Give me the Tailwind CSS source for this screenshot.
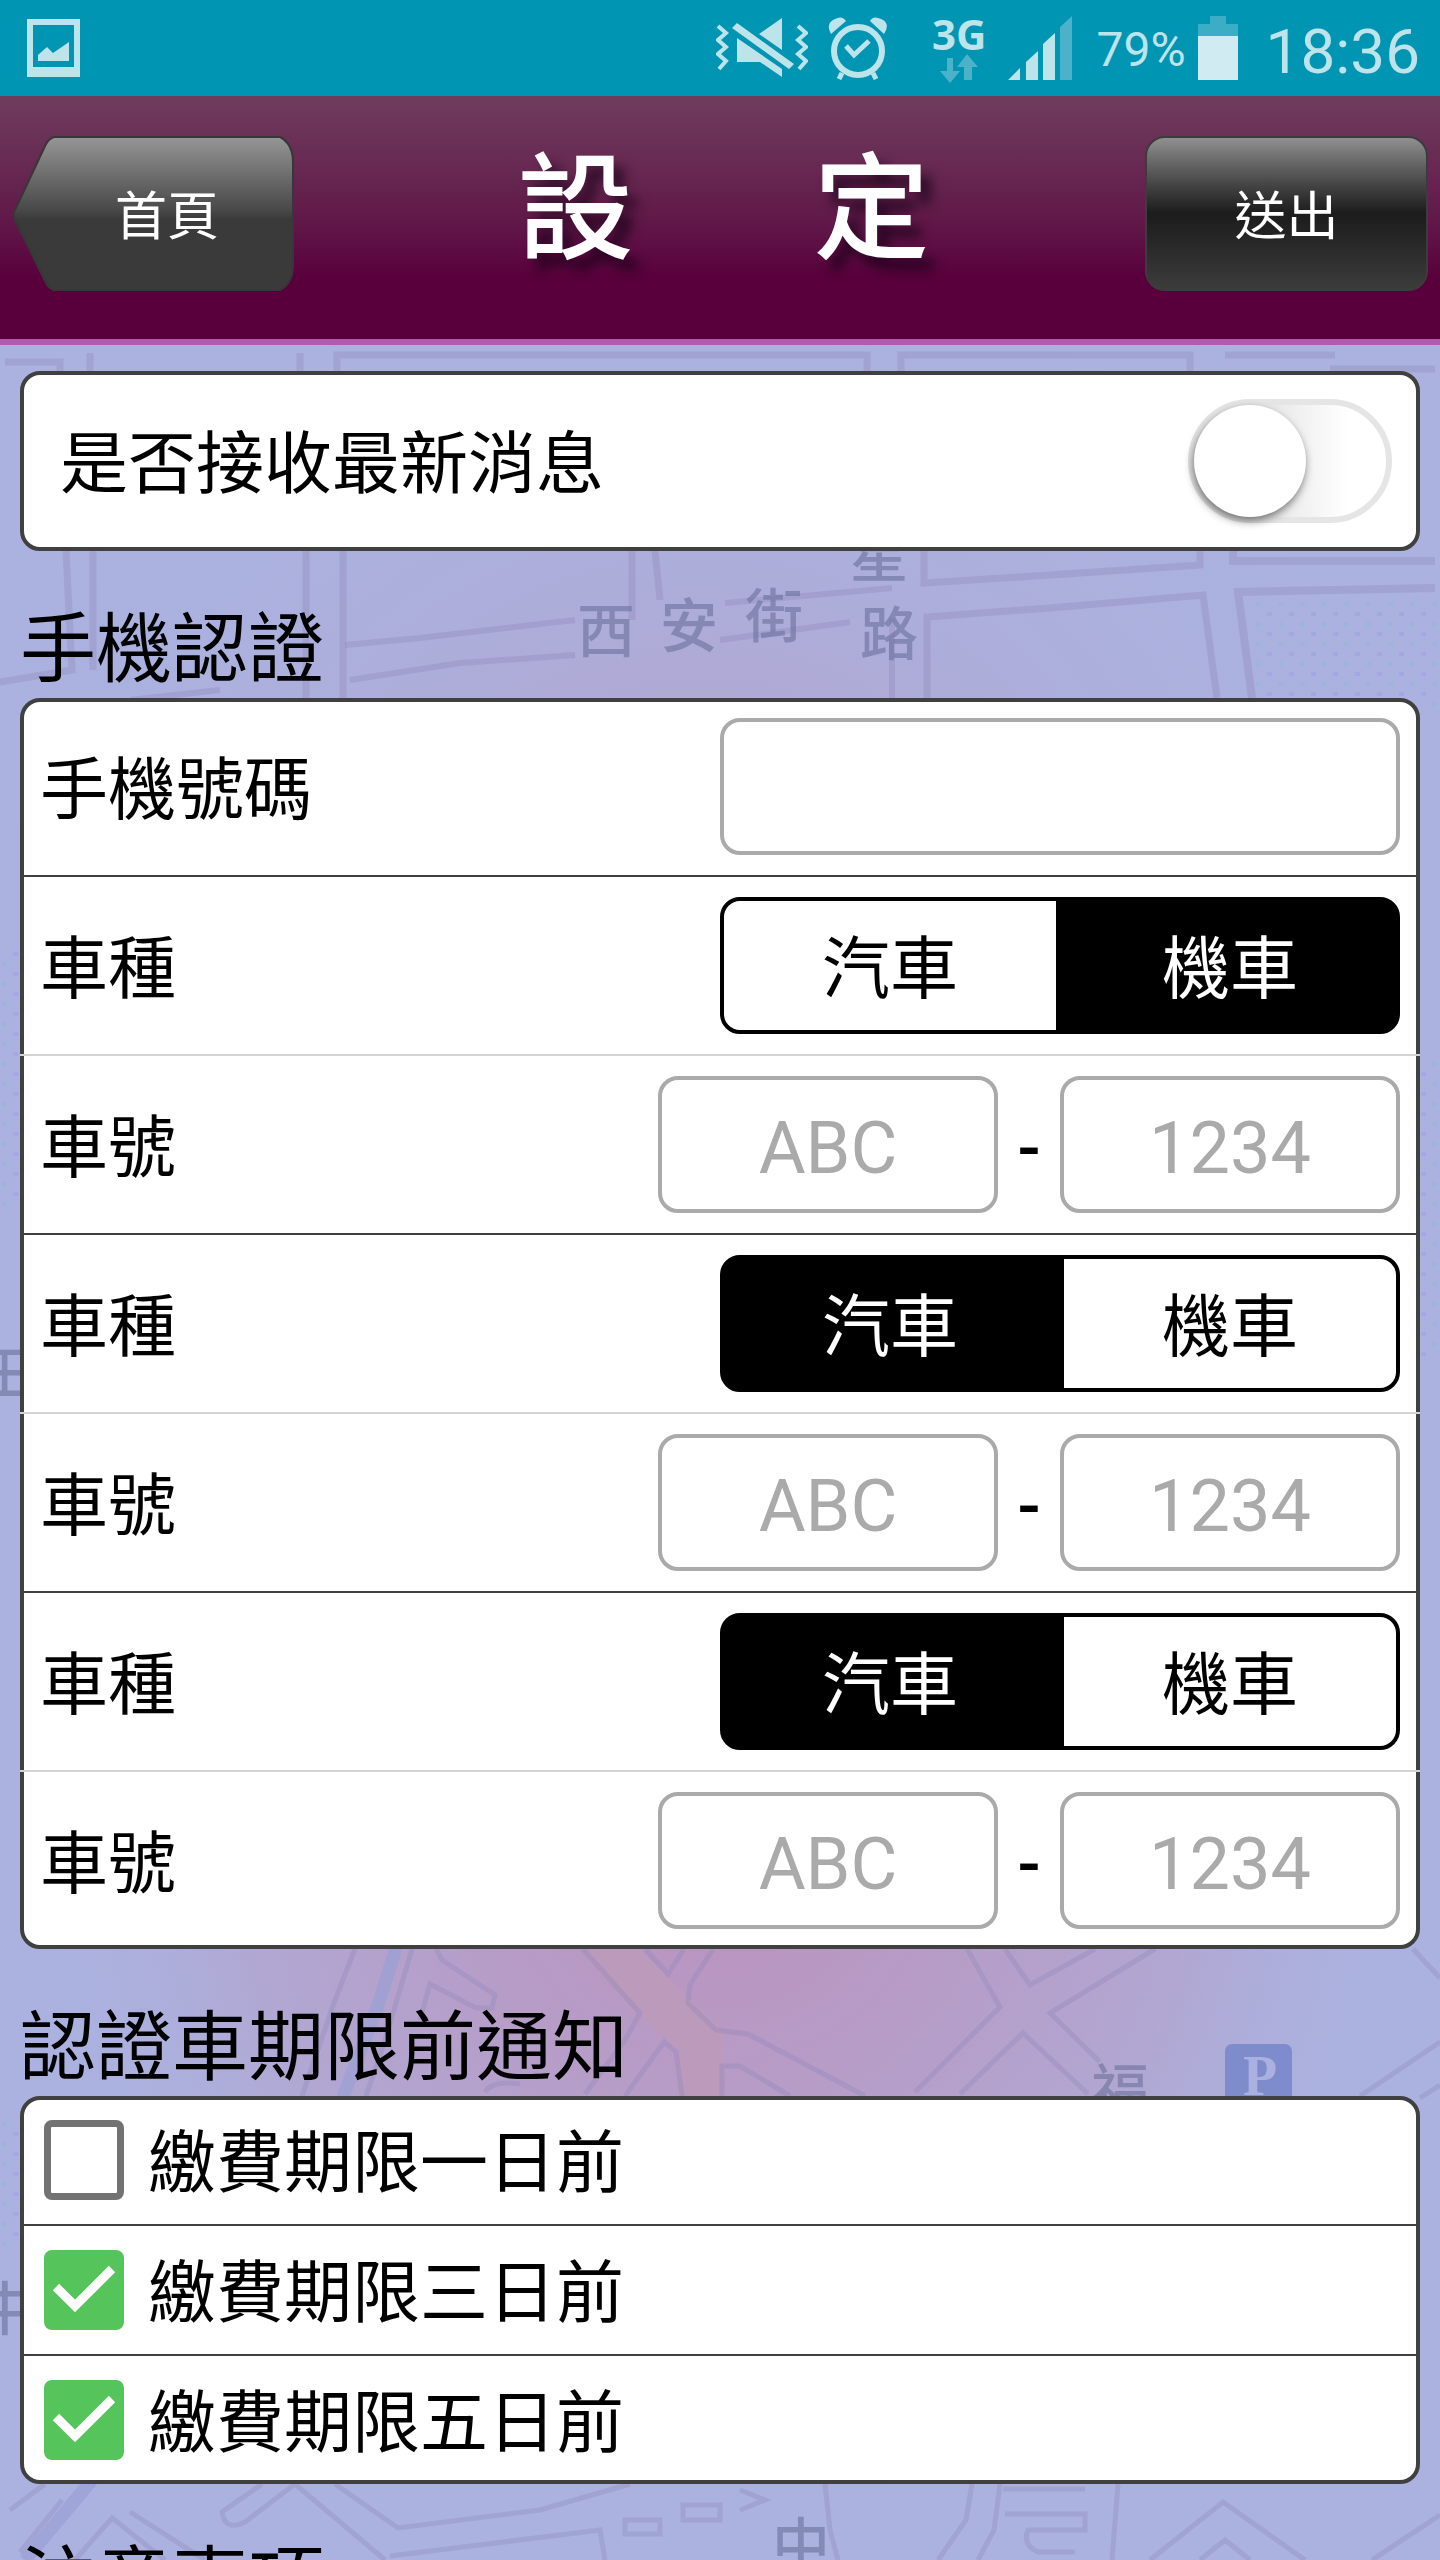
<!DOCTYPE html>
<html lang="zh-Hant">
<head>
  <meta charset="UTF-8" />
  <meta name="viewport" content="width=device-width, initial-scale=1.0" />
  <title>設定</title>
  <script src="https://cdn.jsdelivr.net/npm/@tailwindcss/browser@4"></script>
</head>
<body class="bg-[#abb2e0] text-black font-[Roboto,'Noto_Sans_CJK_TC',sans-serif]">
  <div class="relative isolate h-screen flex flex-col overflow-hidden">

    <!-- Map background -->
    <svg class="absolute inset-0 -z-10 w-full h-full" viewBox="0 0 1440 2560" preserveAspectRatio="xMidYMin slice" aria-hidden="true">
      <defs>
        <radialGradient id="glow" gradientUnits="userSpaceOnUse" cx="0" cy="0" r="1" gradientTransform="translate(720 1860) scale(720 680)">
          <stop offset="0" stop-color="#ba92bd" />
          <stop offset="0.3" stop-color="#b79bc6" />
          <stop offset="0.65" stop-color="#b1a7d2" />
          <stop offset="1" stop-color="#abb2e0" stop-opacity="0" />
        </radialGradient>
        <radialGradient id="haze" gradientUnits="userSpaceOnUse" cx="0" cy="0" r="1" gradientTransform="translate(700 900) scale(740 640)">
          <stop offset="0" stop-color="#b4a0c8" />
          <stop offset="1" stop-color="#abb0de" stop-opacity="0" />
        </radialGradient>
        <pattern id="dots" width="22" height="20" patternUnits="userSpaceOnUse">
          <rect x="2" y="2" width="5" height="4" fill="#9fb4dd" />
          <rect x="13" y="12" width="5" height="4" fill="#a3a8e4" />
        </pattern>
      </defs>
      <rect width="1440" height="2560" fill="#abb2e0" />
      <rect width="1440" height="2560" fill="url(#haze)" />
      <rect width="1440" height="2560" fill="url(#glow)" />
      <rect x="1255" y="600" width="185" height="110" fill="url(#dots)" />
      <rect x="0" y="950" width="24" height="260" fill="url(#dots)" />
      <rect x="1416" y="1060" width="24" height="300" fill="url(#dots)" />
      <rect x="0" y="2120" width="24" height="130" fill="url(#dots)" />
      <path d="M600 1940 L668 2010 L700 2040 V2100" stroke="#bb9abc" stroke-width="46" fill="none" />
      <path d="M397 1945 L378 2005 L342 2100 M92 2480 L25 2560" stroke="#9a9fd4" stroke-opacity="0.7" stroke-width="13" fill="none" />
      <g fill="none" stroke="#8f88ba" stroke-opacity="0.35" stroke-width="5">
        <path d="M5 362 H60 V371 M90 371 V353 M300 353 V371 M337 371 V355 H867 V371 M901 371 V355 H1190 V371 M1225 355 H1335 M1330 369 H1435" stroke-width="7" />
        <path d="M66 551 L72 670 L0 682 M93 551 V670 M306 551 V698 M343 551 V698 M632 551 V620 M655 551 L660 600" stroke-width="7" />
        <path d="M130 700 L220 690 M345 645 L420 638 L575 620 M350 680 L460 663 L575 655 M725 603 L892 588 M720 640 L850 622 M892 618 V698" stroke-width="6" />
        <path d="M924 551 V583 L1050 575 L1200 565 V551 M927 698 V617 L1050 608 L1203 595 L1217 698" stroke-width="7" />
        <path d="M1233 551 V561 H1435 M1252 698 L1238 592 L1435 588" stroke-width="8" />
        <path d="M355 1949 L335 2000 L302 2096 M412 1949 L385 2040 L366 2096 M436 1949 L442 1960 L495 1995 L492 2008 L476 2008 L430 1984 L420 2020 M485 2092 Q492 2080 520 2084" />
        <path d="M583 1949 L640 2013 L625 2040 L585 2094 M645 1949 L668 1974 L684 1949 M713 1949 L690 1985 L688 2003 L716 2030 L748 2034 L865 2096 M722 2096 V2066 L740 2066 L790 2096 M625 2096 L664 2042 L676 2052 L682 2096" />
        <path d="M967 1949 L1000 2007 L915 2092 M1005 1949 L1030 1985 L1095 1949 M1155 1949 L1050 2013 L1100 2062 M960 2094 L1023 2033 L1088 2094 M1413 1949 L1440 1978 M1440 2042 L1360 2096 M1440 2085 L1420 2098" />
        <path d="M45 2484 L10 2510 M62 2500 L20 2552 M130 2512 L205 2560 M75 2560 L112 2518 L165 2560 M262 2484 L222 2512 Q225 2532 245 2522 L295 2484 L385 2560 M335 2484 L398 2528 L540 2510 L630 2484 M390 2556 L600 2530 L605 2560 M625 2520 H660 V2534 H625 Z M683 2505 H720 V2520 H683 Z" />
        <path d="M972 2484 L966 2520 L938 2560 M1000 2484 L994 2530 L978 2560 M1003 2489 H1085 M1005 2514 H1085 V2530 H1028 Q1022 2545 1038 2552 H1075 M1118 2484 L1112 2560 M1150 2560 L1223 2502 L1305 2560 M1200 2560 L1225 2540 L1250 2560 M1372 2560 L1440 2515 M740 2490 L765 2500 L740 2510 M825 2484 L830 2530 L838 2560" />
      </g>
      <g class="font-['Noto_Sans_CJK_TC',sans-serif] font-medium" font-size="58" fill="#6f75a0" fill-opacity="0.65">
        <text x="577" y="652">西</text>
        <text x="660" y="647">安</text>
        <text x="745" y="637">街</text>
        <text x="850" y="577">星</text>
        <text x="860" y="655">路</text>
        <text x="-24" y="1395">田</text>
        <text x="-24" y="2330">中</text>
        <text x="1091" y="2112">福</text>
        <text x="772" y="2566">中</text>
      </g>
      <rect x="1225" y="2044" width="67" height="70" rx="7" fill="#7f8ccc" />
      <text x="1243" y="2095" class="font-['Liberation_Serif',serif] font-bold" font-size="56" fill="#aab0e0">P</text>
    </svg>

    <!-- Status bar -->
    <div class="h-24 shrink-0 flex items-center bg-[#0095b3] text-[#bde3eb] pl-[27px] pr-5">
      <svg class="w-[53px] h-[58px]" viewBox="0 0 53 58" fill="currentColor">
        <path fill-rule="evenodd" d="M0 0H53V58H0Z M6 6V48H47V6Z" />
        <path d="M11 36L20 28L26 34L42 23V42H11Z" />
      </svg>
      <div class="ml-auto flex items-center">
        <!-- Muted, vibrating -->
        <svg class="w-[92px] h-[62px] mr-5" viewBox="718 18 92 62" fill="currentColor">
          <path d="M720 27L728 34L720 41L728 48L720 55L728 62L721 70M800 27L808 34L800 41L808 48L800 55L808 62L801 70" fill="none" stroke="currentColor" stroke-width="4" />
          <path d="M734 29L739 24L796 65L791 70Z M761 35L784 19V51Z M739 39L784 70V78L762 63H739Z" />
        </svg>
        <!-- Alarm -->
        <svg class="w-[60px] h-[64px] mr-[44px]" viewBox="831 17 60 64" fill="none" stroke="currentColor">
          <circle cx="861" cy="52" r="24" stroke-width="6" />
          <path d="M849 47L857 56L872 42" stroke-width="5" />
          <path d="M845 74L842 80M876 74L879 80" stroke-width="5" />
          <path d="M834 35Q828 24 838 20Q845 16 849 22Z M887 35Q894 24 884 20Q876 16 873 22Z" fill="currentColor" stroke="none" />
        </svg>
        <div class="flex flex-col items-center mr-[22px]">
          <span class="font-['Noto_Sans',sans-serif] font-bold text-[42px] leading-[40px]">3G</span>
          <svg class="w-[38px] h-[29px]" viewBox="943 54 38 29" fill="#4bb2c9">
            <path d="M950 58H956V71H963L953 83L943 71H950Z M970 54L981 67H975V80H967V67H960Z" />
          </svg>
        </div>
        <svg class="w-[64px] h-[64px] mr-6" viewBox="1008 17 64 64" fill="currentColor">
          <path d="M1008 81L1020 69V81Z M1026 81V63L1038 52V81Z M1043 81V45L1055 34V81Z" />
          <path d="M1060 81V28L1072 17V81Z" fill="#4bb2c9" />
        </svg>
        <span class="text-[48px] leading-[56px] pt-1">79%</span>
        <svg class="w-10 h-16 ml-3 mr-7" viewBox="0 0 40 64">
          <path d="M12 0H28V8H40V20H0V8H12Z" fill="#3baec6" />
          <path d="M0 20H40V64H0Z" fill="#d0ecf2" />
        </svg>
        <span class="text-[62px] leading-[72px] pt-2">18:36</span>
      </div>
    </div>

    <!-- Title bar -->
    <header class="shrink-0 flex items-start pt-10 pb-12 px-3 bg-linear-to-b from-[#6f3c5e] via-[#5e1045] via-60% to-[#59003c] to-75% border-b-[6px] border-[#b05ab0]">
      <a href="#" class="relative w-[282px] h-[155px] flex items-center justify-center pl-7 pt-2 text-white text-[52px]">
        <svg class="absolute inset-0 w-full h-full" viewBox="0 0 282 155" aria-hidden="true">
          <defs>
            <linearGradient id="back" x2="0" y2="1">
              <stop offset="0" stop-color="#969696" />
              <stop offset="0.48" stop-color="#484848" />
              <stop offset="0.54" stop-color="#3a3a3a" />
              <stop offset="1" stop-color="#3a3a3a" />
            </linearGradient>
          </defs>
          <path d="M42 1H268Q281 8 281 26V129Q281 147 268 154H42Q36 152 33 145L3 84Q0 79 3 74L33 10Q36 3 42 1Z" fill="url(#back)" stroke="#373737" stroke-width="2" />
        </svg>
        <span class="relative">首頁</span>
      </a>
      <h1 class="flex-1 flex justify-center gap-[180px] pl-2 text-white text-[116px] leading-[148px] font-medium [text-shadow:10px_12px_12px_rgb(20_0_20/0.7)]">
        <span>設</span><span>定</span>
      </h1>
      <button type="submit" form="settings" class="w-[283px] h-[155px] pt-2 rounded-[20px] border-2 border-[#3c3c3c] bg-linear-to-b from-[#909090] via-[#1c1c1c] via-50% to-[#3c3c3c] text-white text-[52px]">送出</button>
    </header>

    <!-- Settings -->
    <form id="settings" class="flex-1 min-h-0 overflow-y-auto [scrollbar-width:none] px-5 pt-[26px] text-[68px] leading-[80px]">
      <label class="flex items-center justify-between h-[180px] bg-white border-4 border-[#404040] rounded-[20px] pl-9 pr-6">
        <span class="pt-2">是否接收最新消息</span>
        <input type="checkbox" name="news" class="appearance-none w-[204px] h-[124px] rounded-full border-[6px] border-[#e5e5e5] bg-linear-to-r from-[#e8e8e8] from-40% to-white to-80% before:block before:size-28 before:rounded-full before:bg-white before:shadow-[-1px_4px_8px_rgb(0_0_0/0.5)] checked:bg-[#55c45b] checked:before:ml-20" />
      </label>

      <h2 class="pt-[51px] text-[76px] leading-[96px]">手機認證</h2>
      <div class="bg-white border-4 border-[#404040] rounded-[20px]">
        <div class="flex items-center justify-between px-4 pt-4 pb-5 border-b-2 border-[#404040]">
          <label for="phone" class="pt-2">手機號碼</label>
          <input id="phone" type="tel" class="w-1/2 h-[137px] px-6 border-4 border-[#aaa] rounded-[20px]" />
        </div>

        <div class="flex items-center justify-between -mx-1 px-5 py-5 border-b-2 border-[#d3d3d3]" role="radiogroup" aria-labelledby="type1">
          <span id="type1" class="pt-2">車種</span>
          <div class="w-1/2 h-[137px] flex">
            <label class="relative flex-1 flex items-center justify-center pt-2 border-4 border-black rounded-l-[20px] has-checked:bg-black has-checked:text-white"><input type="radio" name="type1" class="sr-only" />汽車</label>
            <label class="relative flex-1 flex items-center justify-center pt-2 border-4 border-black rounded-r-[20px] has-checked:bg-black has-checked:text-white"><input type="radio" name="type1" class="sr-only" checked />機車</label>
          </div>
        </div>
        <div class="flex items-center px-4 py-5 border-b-2 border-[#404040]">
          <label for="plate1" class="mr-auto pt-2">車號</label>
          <input id="plate1" type="text" placeholder="ABC" class="w-1/4 h-[137px] pt-2 border-4 border-[#aaa] rounded-[20px] text-center text-[72px] placeholder:text-[#aaa]" />
          <span class="w-[62px] pt-2 text-center font-medium">-</span>
          <input type="text" placeholder="1234" aria-label="車號" class="w-1/4 h-[137px] pt-2 border-4 border-[#aaa] rounded-[20px] text-center text-[72px] placeholder:text-[#aaa]" />
        </div>

        <div class="flex items-center justify-between -mx-1 px-5 py-5 border-b-2 border-[#d3d3d3]" role="radiogroup" aria-labelledby="type2">
          <span id="type2" class="pt-2">車種</span>
          <div class="w-1/2 h-[137px] flex">
            <label class="relative flex-1 flex items-center justify-center pt-2 border-4 border-black rounded-l-[20px] has-checked:bg-black has-checked:text-white"><input type="radio" name="type2" class="sr-only" checked />汽車</label>
            <label class="relative flex-1 flex items-center justify-center pt-2 border-4 border-black rounded-r-[20px] has-checked:bg-black has-checked:text-white"><input type="radio" name="type2" class="sr-only" />機車</label>
          </div>
        </div>
        <div class="flex items-center px-4 py-5 border-b-2 border-[#404040]">
          <label for="plate2" class="mr-auto pt-2">車號</label>
          <input id="plate2" type="text" placeholder="ABC" class="w-1/4 h-[137px] pt-2 border-4 border-[#aaa] rounded-[20px] text-center text-[72px] placeholder:text-[#aaa]" />
          <span class="w-[62px] pt-2 text-center font-medium">-</span>
          <input type="text" placeholder="1234" aria-label="車號" class="w-1/4 h-[137px] pt-2 border-4 border-[#aaa] rounded-[20px] text-center text-[72px] placeholder:text-[#aaa]" />
        </div>

        <div class="flex items-center justify-between -mx-1 px-5 py-5 border-b-2 border-[#d3d3d3]" role="radiogroup" aria-labelledby="type3">
          <span id="type3" class="pt-2">車種</span>
          <div class="w-1/2 h-[137px] flex">
            <label class="relative flex-1 flex items-center justify-center pt-2 border-4 border-black rounded-l-[20px] has-checked:bg-black has-checked:text-white"><input type="radio" name="type3" class="sr-only" checked />汽車</label>
            <label class="relative flex-1 flex items-center justify-center pt-2 border-4 border-black rounded-r-[20px] has-checked:bg-black has-checked:text-white"><input type="radio" name="type3" class="sr-only" />機車</label>
          </div>
        </div>
        <div class="flex items-center px-4 pt-5 pb-4">
          <label for="plate3" class="mr-auto pt-2">車號</label>
          <input id="plate3" type="text" placeholder="ABC" class="w-1/4 h-[137px] pt-2 border-4 border-[#aaa] rounded-[20px] text-center text-[72px] placeholder:text-[#aaa]" />
          <span class="w-[62px] pt-2 text-center font-medium">-</span>
          <input type="text" placeholder="1234" aria-label="車號" class="w-1/4 h-[137px] pt-2 border-4 border-[#aaa] rounded-[20px] text-center text-[72px] placeholder:text-[#aaa]" />
        </div>
      </div>

      <h2 class="pt-[51px] text-[76px] leading-[96px]">認證車期限前通知</h2>
      <div class="bg-white border-4 border-[#404040] rounded-[20px]">
        <label class="flex items-center gap-6 h-[126px] px-5 pb-1 border-b-2 border-[#404040]">
          <span class="grid size-20">
            <input type="checkbox" class="peer col-start-1 row-start-1 appearance-none size-20 rounded-lg border-[7px] border-[#727272] checked:border-[#55c45b] checked:bg-[#55c45b]" />
            <svg class="col-start-1 row-start-1 size-20 pointer-events-none invisible peer-checked:visible" viewBox="0 0 80 80" fill="none" stroke="#fff" stroke-width="9"><path d="M12 37L31 56L68 19" /></svg>
          </span>
          <span class="pt-2">繳費期限一日前</span>
        </label>
        <label class="flex items-center gap-6 h-[130px] px-5 border-b-2 border-[#404040]">
          <span class="grid size-20">
            <input type="checkbox" checked class="peer col-start-1 row-start-1 appearance-none size-20 rounded-lg border-[7px] border-[#727272] checked:border-[#55c45b] checked:bg-[#55c45b]" />
            <svg class="col-start-1 row-start-1 size-20 pointer-events-none invisible peer-checked:visible" viewBox="0 0 80 80" fill="none" stroke="#fff" stroke-width="9"><path d="M12 37L31 56L68 19" /></svg>
          </span>
          <span class="pt-2">繳費期限三日前</span>
        </label>
        <label class="flex items-center gap-6 h-[124px] px-5 pt-1">
          <span class="grid size-20">
            <input type="checkbox" checked class="peer col-start-1 row-start-1 appearance-none size-20 rounded-lg border-[7px] border-[#727272] checked:border-[#55c45b] checked:bg-[#55c45b]" />
            <svg class="col-start-1 row-start-1 size-20 pointer-events-none invisible peer-checked:visible" viewBox="0 0 80 80" fill="none" stroke="#fff" stroke-width="9"><path d="M12 37L31 56L68 19" /></svg>
          </span>
          <span class="pt-2">繳費期限五日前</span>
        </label>
      </div>

      <h2 class="pt-[51px] text-[76px] leading-[96px]">注意事項</h2>
    </form>
  </div>
</body>
</html>
